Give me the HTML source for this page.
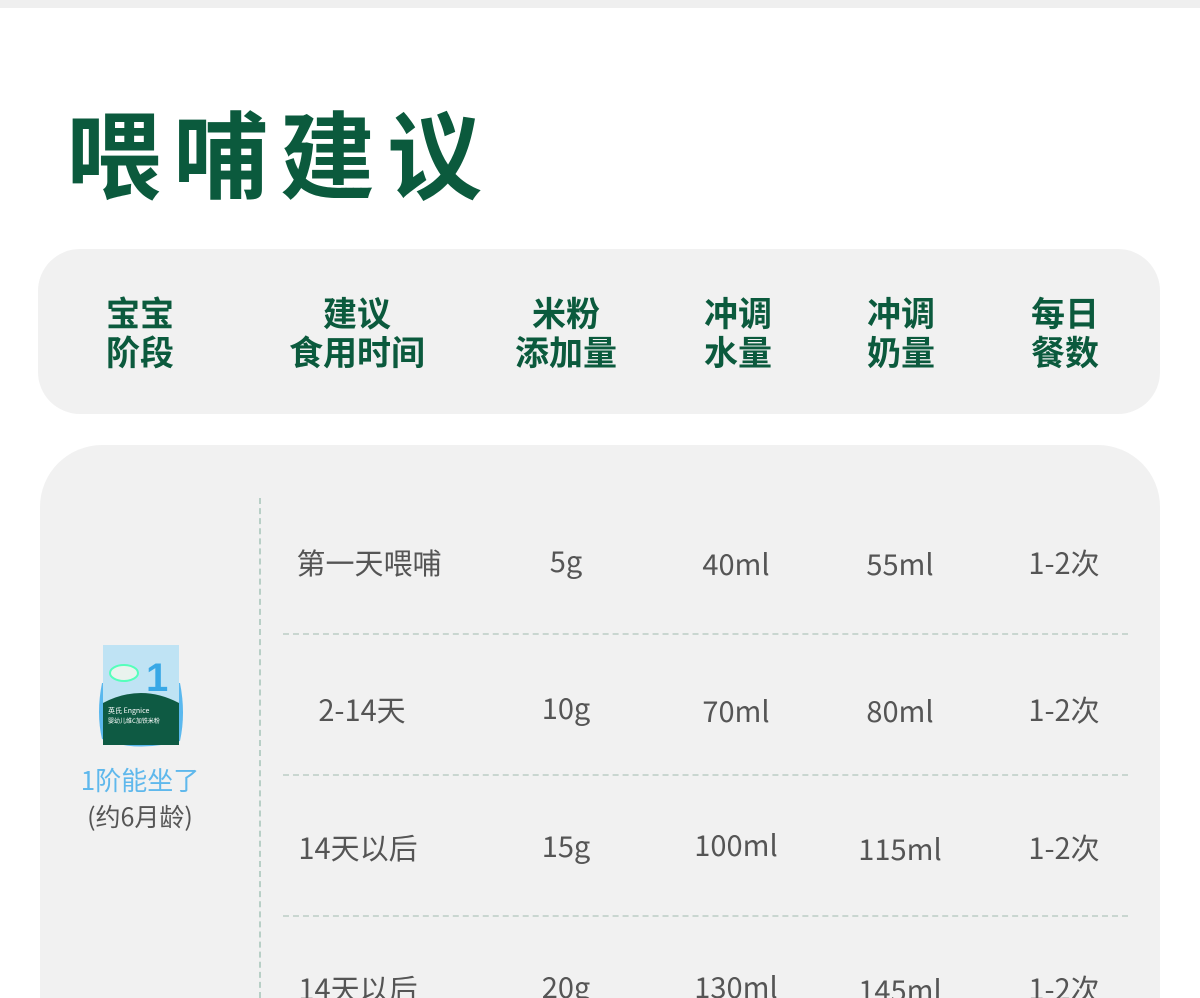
<!DOCTYPE html>
<html><head><meta charset="utf-8"><style>
*{margin:0;padding:0;box-sizing:border-box}
html{width:1200px;height:998px;overflow:hidden}
body{width:1200px;height:998px;overflow:hidden;background:#fff;position:relative;font-family:"Noto Sans CJK SC","Liberation Sans",sans-serif}
.top{position:absolute;left:0;top:0;width:1200px;height:8px;background:#efefef}
.title{position:absolute;left:66px;top:94px;font-size:95px;font-weight:700;color:#0b5a3d;letter-spacing:12px;line-height:1.2}
.hdr{position:absolute;left:38px;top:249px;width:1122px;height:165px;background:#f1f1f1;border-radius:42px}
.h{position:absolute;top:292px;transform:translateX(-50%);text-align:center;color:#0b5a3d;font-weight:700;font-size:34px;line-height:39px;white-space:nowrap}
.body{position:absolute;left:40px;top:445px;width:1120px;height:553px;background:#f1f1f1;border-radius:62px 62px 0 0}
.vl{position:absolute;left:259px;top:498px;height:500px;border-left:2px dashed #b8cfc6}
.hl{position:absolute;left:283px;width:845px;border-top:2px dashed #c9d6d0}
.c{position:absolute;transform:translate(-50%,-50%);color:#555;font-size:29px;white-space:nowrap}
.st{position:absolute;left:140px;transform:translateX(-50%);white-space:nowrap;font-size:26px}
</style></head><body>
<div class="top"></div>
<div class="title">喂哺建议</div>
<div class="hdr"></div>
<div class="h" style="left:140px">宝宝<br>阶段</div>
<div class="h" style="left:357px">建议<br>食用时间</div>
<div class="h" style="left:566px">米粉<br>添加量</div>
<div class="h" style="left:738px">冲调<br>水量</div>
<div class="h" style="left:901px">冲调<br>奶量</div>
<div class="h" style="left:1065px">每日<br>餐数</div>
<div class="body"></div>
<div class="vl"></div>
<div class="hl" style="top:633px"></div>
<div class="hl" style="top:774px"></div>
<div class="hl" style="top:915px"></div>
<svg style="position:absolute;left:96px;top:643px" width="90" height="112" viewBox="0 0 90 112">
<path d="M6 40 Q0 70 6 96 Q40 110 84 98 Q90 70 84 40Z" fill="#5ab8ee"/>
<rect x="7" y="2" width="76" height="100" fill="#0e5a43"/>
<path d="M7 2 H83 V60 Q45 40 7 60Z" fill="#bfe3f4"/>
<text x="50" y="48" font-size="40" font-weight="700" fill="#38a8e6" font-family="Liberation Sans">1</text>
<ellipse cx="28" cy="30" rx="14" ry="8" fill="#e9f3ee" stroke="#5fb" stroke-width="2"/>
<text x="12" y="70" font-size="7" fill="#fff">英氏 Engnice</text>
<text x="12" y="80" font-size="6" fill="#fff">婴幼儿维C加铁米粉</text>
</svg>
<div class="st" style="top:761px;color:#5fb8ec">1阶能坐了</div>
<div class="st" style="top:798px;color:#555;font-size:25px">(约6月龄)</div>
<div class="c" style="left:369px;top:562px">第一天喂哺</div>
<div class="c" style="left:566px;top:560px">5g</div>
<div class="c" style="left:736px;top:563px">40ml</div>
<div class="c" style="left:900px;top:563px">55ml</div>
<div class="c" style="left:1064px;top:562px">1-2次</div>
<div class="c" style="left:362px;top:709px">2-14天</div>
<div class="c" style="left:566px;top:707px">10g</div>
<div class="c" style="left:736px;top:710px">70ml</div>
<div class="c" style="left:900px;top:710px">80ml</div>
<div class="c" style="left:1064px;top:709px">1-2次</div>
<div class="c" style="left:358px;top:847px">14天以后</div>
<div class="c" style="left:566px;top:845px">15g</div>
<div class="c" style="left:736px;top:844px">100ml</div>
<div class="c" style="left:900px;top:848px">115ml</div>
<div class="c" style="left:1064px;top:847px">1-2次</div>
<div class="c" style="left:358px;top:988px">14天以后</div>
<div class="c" style="left:566px;top:986px">20g</div>
<div class="c" style="left:736px;top:986px">130ml</div>
<div class="c" style="left:900px;top:989px">145ml</div>
<div class="c" style="left:1064px;top:988px">1-2次</div>
</body></html>
